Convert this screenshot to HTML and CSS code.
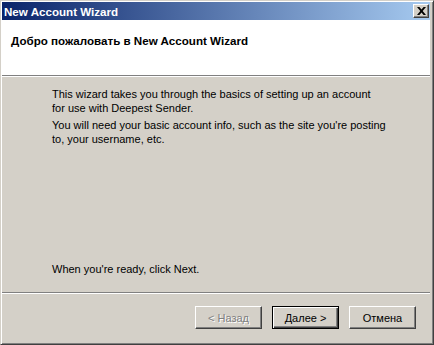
FILE: index.html
```html
<!DOCTYPE html>
<html lang="ru">
<head>
    <meta charset="UTF-8">
    <title>New Account Wizard</title>
    <link rel="stylesheet" href="styles.css">
</head>
<body>
    <div class="window">
        <div class="titlebar">
            <span class="title">New Account Wizard</span>
            <button class="close-btn" aria-label="Close">
                <svg width="9" height="8" viewBox="0 0 9 8">
                    <path d="M0 0h2.4l2.1 2.6L6.6 0H9L5.7 4 9 8H6.6L4.5 5.4 2.4 8H0l3.3-4z" fill="#000"/>
                </svg>
            </button>
        </div>

        <div class="header">
            <h1>Добро пожаловать в New Account Wizard</h1>
        </div>

        <div class="content">
            <p>This wizard takes you through the basics of setting up an account<br>for use with Deepest Sender.</p>
            <p>You will need your basic account info, such as the site you're posting<br>to, your username, etc.</p>
            <p class="ready">When you're ready, click Next.</p>
        </div>

        <div class="footer">
            <button class="btn" disabled>&lt; Назад</button>
            <button class="btn default">Далее &gt;</button>
            <button class="btn">Отмена</button>
        </div>
    </div>
</body>
</html>
```

FILE: styles.css
```css
* {
    box-sizing: border-box;
}
body {
    margin: 0;
    background-color: #d4d0c8;
    font-family: "Liberation Sans", Arial, sans-serif;
    font-size: 11px;
    color: #000;
}
.window {
    width: 434px;
    height: 345px;
    display: flex;
    flex-direction: column;
    border: 1px solid;
    border-color: #d4d0c8 #404040 #404040 #d4d0c8;
    box-shadow: inset 1px 1px #fff, inset -1px -1px #808080;
    padding: 1px 3px 3px 1px;
}
.titlebar {
    height: 18px;
    display: flex;
    align-items: center;
    justify-content: space-between;
    padding: 0 1px 0 2px;
    background: linear-gradient(to right, #0a246a, #a6caf0);
}
.title {
    color: #fff;
    font-weight: bold;
    font-size: 11.6px;
}
.close-btn {
    width: 16px;
    height: 14px;
    padding: 0;
    display: flex;
    align-items: center;
    justify-content: center;
    background-color: #d4d0c8;
    border: 1px solid;
    border-color: #fff #404040 #404040 #fff;
    box-shadow: inset -1px -1px #808080;
}
.header {
    height: 56px;
    background-color: #fff;
    border-bottom: 1px solid #808080;
    box-shadow: 0 1px #fff;
    padding: 14px 0 0 9px;
}
.header h1 {
    margin: 0;
    font-size: 11.6px;
    line-height: 14px;
    font-weight: bold;
}
.content {
    flex: 1;
    display: flex;
    flex-direction: column;
    padding: 11px 10px 16px 50px;
    border-bottom: 1px solid #808080;
    box-shadow: 0 1px #fff;
    white-space: nowrap;
}
.content p {
    margin: 0 0 3px;
    line-height: 14px;
}
.content .ready {
    margin-top: auto;
    margin-bottom: 0;
}
.footer {
    height: 48px;
    display: flex;
    justify-content: flex-end;
    align-items: flex-start;
    gap: 10px;
    padding: 13px 14px 0 0;
}
.btn {
    width: 67px;
    height: 23px;
    padding: 0;
    font-family: inherit;
    font-size: 11px;
    color: #000;
    background-color: #d4d0c8;
    border: 1px solid;
    border-color: #fff #404040 #404040 #fff;
    box-shadow: inset -1px -1px #808080;
}
.btn:disabled {
    color: #808080;
    text-shadow: 1px 1px #fff;
}
.btn.default {
    border: 1px solid #000;
    box-shadow: inset 1px 1px #fff, inset -1px -1px #404040, inset -2px -2px #808080;
}
```
